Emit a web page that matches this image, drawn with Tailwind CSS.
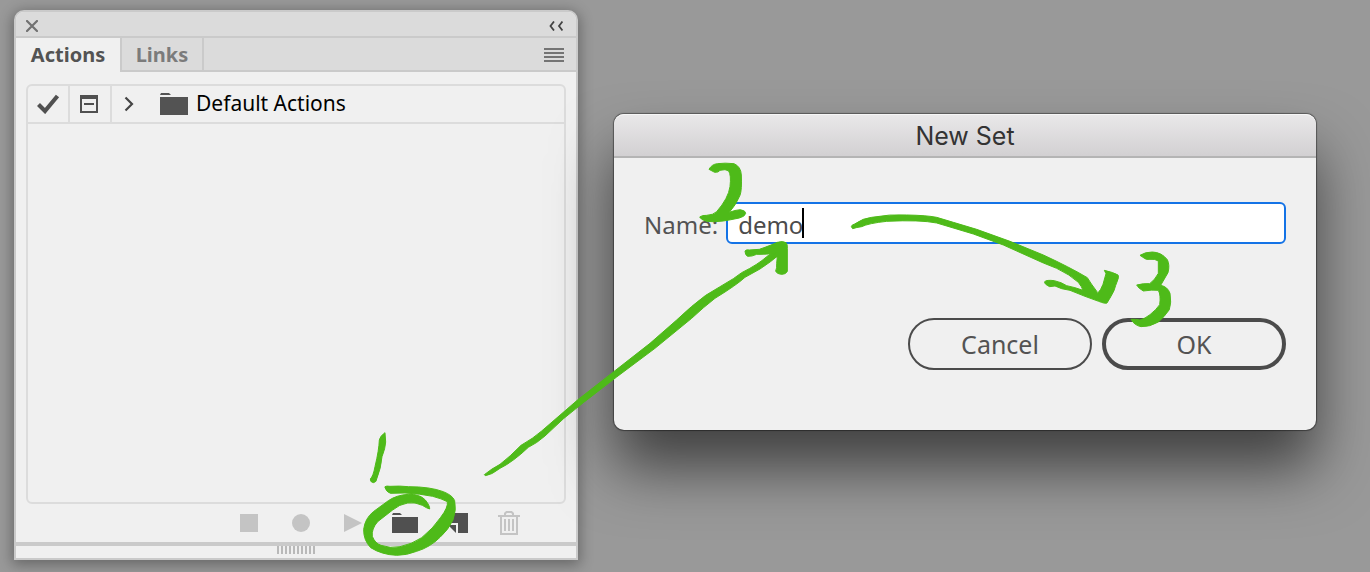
<!DOCTYPE html>
<html lang="en">
<head>
<meta charset="utf-8">
<meta name="viewport" content="width=device-width, initial-scale=1">
<title>Actions – New Set</title>
<script src="https://cdn.jsdelivr.net/npm/@tailwindcss/browser@4"></script>
</head>
<body class="bg-[#999999] font-['Noto_Sans',sans-serif]">
<main class="relative flex min-h-screen items-start gap-9 overflow-hidden pt-[10px] pr-[54px] pl-[14px]">

  <!-- Actions panel -->
  <section aria-label="Actions panel" class="flex min-w-0 flex-[560] flex-col rounded-t-[10px] border-2 border-[#cacaca] bg-[#f0f0f0] shadow-[0_3px_14px_2px_rgba(0,0,0,0.32)]">
    <header class="flex h-[26px] items-center justify-between rounded-t-lg border-b-2 border-[#cacaca] bg-[#dbdbdb] pt-[3px] pr-[13px] pl-[10px]">
      <button aria-label="Close" class="h-3 w-3"><svg class="block" width="12" height="12" viewBox="0 0 12 12" fill="none" stroke="#727272" stroke-width="2.2" stroke-linecap="round"><path d="M1 1l10 10M11 1L1 11"/></svg></button>
      <button aria-label="Collapse" class="h-[10px] w-[14px]"><svg class="block" width="14" height="10" viewBox="0 0 14 10" fill="none" stroke="#424242" stroke-width="1.8"><path d="M5 .5L1.5 5L5 9.500M13.500 .5L10 5l3.500 4.500"/></svg></button>
    </header>
    <nav class="flex h-[34px] bg-[#dbdbdb] text-xl font-bold" role="tablist">
      <button role="tab" aria-selected="true" class="w-[106px] border-r-2 border-[#cacaca] bg-[#f0f0f0] text-[#535353]">Actions</button>
      <button role="tab" aria-selected="false" class="w-[82px] border-r-2 border-b-2 border-[#cacaca] pt-[2px] text-[#7b7b7b]">Links</button>
      <div class="flex grow items-center justify-end border-b-2 border-[#cacaca] pt-[2px] pr-3">
        <button aria-label="Panel menu"><svg class="block" width="20" height="14" viewBox="0 0 20 14" fill="#747474"><path d="M0 0h20v2H0zM0 4h20v2H0zM0 8h20v2H0zM0 12h20v2H0z"/></svg></button>
      </div>
    </nav>
    <div class="mx-[10px] mt-3 h-[420px] rounded-md border-2 border-[#dcdcdc]">
      <div class="flex h-[38px] border-b-2 border-[#dcdcdc]">
        <button aria-label="Toggle item" class="flex w-[42px] items-center justify-center border-r-2 border-[#dcdcdc]"><svg width="24" height="20" viewBox="0 0 24 20" fill="none" stroke="#505050" stroke-width="4.200"><path d="M2.500 10.500L9 17L21.500 2"/></svg></button>
        <button aria-label="Toggle dialog" class="flex w-[42px] items-center border-r-2 border-[#dcdcdc] pl-[10px]"><svg width="18" height="18" viewBox="0 0 18 18" fill="#505050"><path fill-rule="evenodd" d="M0 0h18v18H0zM2 4v12h14V4z"/><path d="M4 8h10v2H4z"/></svg></button>
        <button aria-label="Expand" class="flex w-[34px] items-center justify-center"><svg width="10" height="16" viewBox="0 0 10 16" fill="none" stroke="#454545" stroke-width="2.200"><path d="M1.500 1.500L8 8L1.500 14.500"/></svg></button>
        <div class="flex items-center gap-2 pl-[14px] text-[21px] text-black">
          <svg width="28" height="22" viewBox="0 0 28 22" fill="#535353"><path d="M0 2L1 0H9L11 2zM0 4h28v18H0z"/></svg>
          <span>Default Actions</span>
        </div>
      </div>
    </div>
    <footer class="flex h-[38px] items-center justify-end gap-[34px] pr-14">
      <button aria-label="Stop"><svg class="block" width="18" height="18"><path d="M0 0h18v18H0z" fill="#c4c4c4"/></svg></button>
      <button aria-label="Record"><svg class="block" width="18" height="18"><circle cx="9" cy="9" r="9" fill="#c4c4c4"/></svg></button>
      <button aria-label="Play"><svg class="block" width="18" height="18"><path d="M0 0L18 9L0 18z" fill="#c4c4c4"/></svg></button>
      <button aria-label="Create new set" class="-mx-[4px]"><svg class="block" width="26" height="20" viewBox="0 0 26 20" fill="#505050"><path d="M0 2L1 0H8L10 2zM0 4h26v16H0z"/></svg></button>
      <button aria-label="Create new action"><svg class="block" width="20" height="20" viewBox="0 0 20 20" fill="#505050"><path d="M0 0h20v20H10V10H0zM0 12h8v8z"/></svg></button>
      <button aria-label="Delete" class="-ml-1"><svg class="block" width="22" height="24" viewBox="0 0 22 24" fill="none" stroke="#c4c4c4" stroke-width="2"><path d="M0 5h22M3 5v18h16V5M7 5V2.500L8.500 1h5L15 2.500V5M7 8v12M11 8v12M15 8v12"/></svg></button>
    </footer>
    <div class="flex h-4 justify-center border-t-4 border-[#cacaca]">
      <svg width="38" height="8" viewBox="0 0 38 8" stroke="#b9b9b9" stroke-width="2"><path d="M1 0v8M5 0v8M9 0v8M13 0v8M17 0v8M21 0v8M25 0v8M29 0v8M33 0v8M37 0v8"/></svg>
    </div>
  </section>

  <!-- New Set dialog -->
  <form aria-label="New Set" class="mt-[104px] flex min-w-0 flex-[702] flex-col rounded-[10px] bg-[#f0f0f0] pb-[60px] text-[25px] text-[#535353] shadow-[0_0_1px_1px_rgba(0,0,0,0.4),0_38px_60px_0px_rgba(0,0,0,0.58)]">
    <h1 class="flex h-11 items-center justify-center rounded-t-[10px] border-t border-b-2 border-t-[#f6f6f6] border-b-[#b4b4b4] bg-linear-to-b from-[#e9e8e9] to-[#d2d0d2] pt-[3px] font-['Inter',sans-serif] text-[25px] text-[#333333]">New Set</h1>
    <div class="mt-11 flex items-center gap-2 px-[30px] text-2xl">
      <label for="set-name" class="pt-[3px]">Name:</label>
      <div class="relative grow">
        <input id="set-name" type="text" value="demo" class="block h-[42px] w-full rounded-md border-2 border-[#1473e6] bg-white px-[10px] pt-[3px] text-[#4b4b4b] outline-none">
        <span class="absolute top-[6px] left-[76px] h-[30px] w-[2px] bg-black"></span>
      </div>
    </div>
    <div class="mt-[74px] flex justify-end gap-[10px] pr-[30px]">
      <button type="button" class="h-[52px] w-[184px] rounded-full border-2 border-[#4b4b4b] pt-[2px]">Cancel</button>
      <button type="submit" class="h-[52px] w-[184px] rounded-full border-4 border-[#4b4b4b] pt-[2px]">OK</button>
    </div>
  </form>

  <!-- Hand-drawn step marks: 1, 2, 3 and the arrows between them -->
  <svg aria-label="Steps 1, 2, 3" class="pointer-events-none absolute top-0 left-0" width="1370" height="572" viewBox="0 0 1370 572" fill="#4eba19" stroke="#4eba19" stroke-width="3" stroke-linejoin="round">
    <g transform="translate(340 420) scale(.33333)">
      <path d="M135 38Q120 48 118 60Q117 90 105 140Q100 168 91 177Q90 186 100 188Q110 186 110 177Q123 145 126 110Q136 85 137 66Z"/>
      <path d="M135 200Q139 197 150 199Q180 197 205 200Q270 200 310 215Q338 226 344 242Q350 270 339 300Q325 330 300 352Q270 382 230 394Q200 406 170 406Q125 404 92 383Q70 360 71 328Q75 295 100 275L145 242Q170 225 205 223Q240 222 256 240Q270 258 269 267Q261 265 247 256Q225 245 203 249Q178 253 158 270L113 305Q94 327 97 349Q105 370 123 376Q150 386 180 380Q215 373 245 353Q280 325 302 292Q325 262 322 245Q305 236 278 229Q240 221 195 219L151 220Q139 215 135 203Z"/>
    </g>
    <path transform="translate(470 250) scale(.33333)" d="M43 674Q65 656 90 643Q120 620 153 586Q190 565 215 543L325 448L430 366L540 280L620 210Q665 167 707 136Q750 110 790 86L815 68Q865 43 890 20L925 -5L935 8Q900 38 870 57L825 82Q800 105 735 145Q700 172 665 205L555 295L440 381L340 458Q280 503 225 558Q200 580 175 592Q130 635 90 655Q65 675 46 677Z"/>
    <g transform="translate(600 100) scale(.33333)">
      <path d="M435 453Q439 448 448 450L478 448Q515 435 532 427Q548 422 558 428Q563 433 562 445V514Q558 523 546 523Q530 522 527 513Q531 505 530 490L532 470L512 474L526 459Q500 464 470 463Q455 470 443 469Q435 466 435 453Z"/>
      <path d="M327 208Q335 193 352 191Q375 188 402 191Q423 200 424 225Q426 270 420 286Q408 315 388 337Q405 330 421 329Q438 332 437 340Q435 350 418 354Q390 360 370 363Q340 367 320 364Q302 359 299 351Q307 345 320 346Q340 345 350 335Q385 295 390 260Q394 225 386 213Q377 206 360 211Q356 218 344 217Z"/>
    </g>
    <path transform="translate(840 190) scale(.33333)" d="M34 110Q35 104 44 102Q70 84 95 82Q150 72 200 75Q260 76 290 82L340 97L410 118L510 154L610 195Q690 232 742 263Q752 280 771 305L772 311Q783 300 789 283L798 251L793 241Q820 247 834 255Q838 260 832 273Q827 285 822 302Q813 320 801 339Q796 342 776 334L735 319L690 301L665 296L645 288L629 290Q612 282 614 275Q620 269 643 272Q665 277 680 287Q705 292 729 301Q726 291 715 277Q690 254 650 235L610 219L490 165L400 132L290 99Q240 89 140 94Q85 100 65 110Q50 112 38 116Z"/>
    <path transform="translate(1090 190) scale(.33333)" d="M150 196Q165 186 187 186Q215 187 232 209Q240 225 234 248L212 286Q233 290 240 310Q245 338 238 359Q222 382 205 396Q180 411 153 410Q133 406 123 388Q137 387 150 390Q165 386 180 374Q200 358 209 344Q213 315 205 301Q185 299 160 303Q145 295 140 285Q160 280 179 281Q195 270 205 250V213Q195 206 180 208Q168 210 162 204Z"/>
  </svg>
</main>
</body>
</html>
